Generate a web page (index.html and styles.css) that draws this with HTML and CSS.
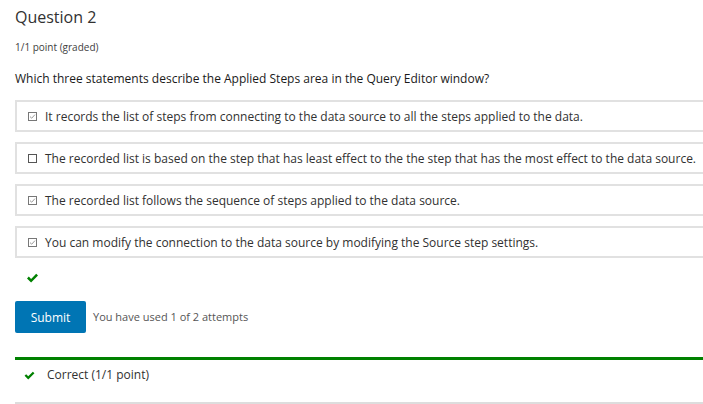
FILE: index.html
```html
<!DOCTYPE html>
<html>
<head>
<meta charset="utf-8">
<link rel="stylesheet" href="styles.css">
</head>
<body>
<div class="problem">
  <h3 class="title">Question 2</h3>
  <div class="points">1/1 point (graded)</div>
  <p class="prompt">Which three statements describe the Applied Steps area in the Query Editor window?</p>
  <div class="choices">
    <label class="choice">
      <svg class="cb" width="9" height="9" viewBox="0 0 9 9"><rect x="0.5" y="0.5" width="8" height="8" fill="#fff" stroke="#777"/><path d="M2 4.6 L3.7 6.2 L7 2.6" fill="none" stroke="#9a9a9a" stroke-width="1"/></svg>
      <span>It records the list of steps from connecting to the data source to all the steps applied to the data.</span>
    </label>
    <label class="choice">
      <svg class="cb" width="9" height="9" viewBox="0 0 9 9"><rect x="0.5" y="0.5" width="8" height="8" fill="#fff" stroke="#555"/></svg>
      <span>The recorded list is based on the step that has least effect to the the step that has the most effect to the data source.</span>
    </label>
    <label class="choice">
      <svg class="cb" width="9" height="9" viewBox="0 0 9 9"><rect x="0.5" y="0.5" width="8" height="8" fill="#fff" stroke="#777"/><path d="M2 4.6 L3.7 6.2 L7 2.6" fill="none" stroke="#9a9a9a" stroke-width="1"/></svg>
      <span>The recorded list follows the sequence of steps applied to the data source.</span>
    </label>
    <label class="choice">
      <svg class="cb" width="9" height="9" viewBox="0 0 9 9"><rect x="0.5" y="0.5" width="8" height="8" fill="#fff" stroke="#777"/><path d="M2 4.6 L3.7 6.2 L7 2.6" fill="none" stroke="#9a9a9a" stroke-width="1"/></svg>
      <span>You can modify the connection to the data source by modifying the Source step settings.</span>
    </label>
  </div>
  <div class="status">
    <svg width="11" height="10" viewBox="0 0 11 10"><path d="M0 5.4 L1.8 3.6 L4.1 5.9 L9.2 0.8 L11 2.6 L4.1 9.5 Z" fill="#008100"/></svg>
  </div>
  <div class="actions">
    <button class="submit">Submit</button>
    <span class="attempts">You have used 1 of 2 attempts</span>
  </div>
  <div class="feedback">
    <svg width="11" height="9" viewBox="0 0 11 10"><path d="M0 5.4 L1.8 3.6 L4.1 5.9 L9.2 0.8 L11 2.6 L4.1 9.5 Z" fill="#008100"/></svg>
    <span>Correct (1/1 point)</span>
  </div>
</div>
</body>
</html>
```

FILE: styles.css
```css
html, body {
  margin: 0;
  padding: 0;
  background: #fff;
  overflow: hidden;
}
body {
  font-family: "Open Sans", "Noto Sans", sans-serif;
  color: #313131;
}
.problem {
  padding: 5px 0 0 15px;
}
.title {
  margin: 0;
  font-size: 16px;
  font-weight: 400;
  line-height: 24px;
  color: #313131;
}
.points {
  margin-top: 11px;
  font-size: 10px;
  line-height: 14px;
  color: #414141;
}
.prompt {
  margin: 16px 0 0 0;
  font-size: 12px;
  line-height: 18px;
  color: #1a1a1a;
}
.choices {
  margin-top: 12px;
  margin-right: -20px;
  display: flex;
  flex-direction: column;
  gap: 10px;
}
.choice {
  display: flex;
  align-items: center;
  gap: 8px;
  height: 32px;
  box-sizing: border-box;
  border: 2px solid #e1e1e1;
  padding-left: 11px;
  font-size: 12px;
  color: #313131;
}
.cb {
  flex: none;
}
.status {
  padding: 15px 0 0 12px;
  height: 10px;
}
.status svg {
  display: block;
}
.actions {
  margin-top: 18px;
  display: flex;
  align-items: flex-start;
  gap: 7px;
}
.submit {
  font-family: "Open Sans", "Noto Sans", sans-serif;
  background: #0075b4;
  color: #fff;
  border: none;
  border-radius: 2px;
  width: 71px;
  height: 32px;
  font-size: 12px;
  padding: 0;
}
.attempts {
  font-size: 11px;
  color: #555;
  margin-top: 8px;
}
.feedback {
  margin-top: 24px;
  margin-right: -20px;
  border-top: 3px solid #008100;
  border-bottom: 2px solid #ddd;
  display: flex;
  align-items: flex-start;
  gap: 12px;
  padding: 6px 0 0 9px;
  box-sizing: border-box;
  height: 47px;
  font-size: 12px;
  line-height: 18px;
  color: #313131;
}
.feedback svg {
  margin-top: 5px;
}
```
